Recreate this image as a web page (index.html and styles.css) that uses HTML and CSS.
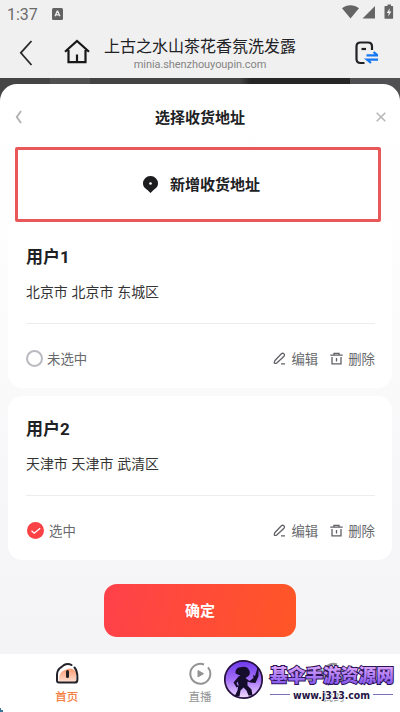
FILE: index.html
```html
<!DOCTYPE html>
<html lang="zh-CN">
<head>
<meta charset="utf-8">
<title>选择收货地址</title>
<link rel="stylesheet" href="styles.css">
</head>
<body>
<div class="screen">
  <header class="status">
    <span class="clock">1:37</span>
    <svg class="badge-a" width="11" height="12" viewBox="0 0 11 12"><rect width="11" height="12" rx="1.5" fill="#626262"/><path d="M3 8.3 5.2 3.2h.5L8 8.3M3.8 6.9h3.3" fill="none" stroke="#f0f0f0" stroke-width="1.2"/></svg>
    <svg class="signals" width="52" height="16" viewBox="0 0 52 16"><path d="M0 4.3C4.800 .1 12 .1 17 4.300L8.500 14.500Z M33 2v12.500H20.500Z" fill="#656565"/><path d="M43.500 2h2V.5h3.500V2h1.500q.6 0 .6.7v11.200q0 .9-.8.9h-7q-.8 0-.8-.9V2.700q0-.7.8-.7Z" fill="#656565"/><path d="M47.800 4.300 44.700 9h2l-.5 3.500 3.200-5h-2Z" fill="#f0f0f0"/></svg>
  </header>
  <nav class="topbar">
    <svg class="back" width="14" height="26" viewBox="0 0 14 26"><path d="M12.500 1 1.800 12.800 12.500 25" fill="none" stroke="#292929" stroke-width="1.800"/></svg>
    <svg class="house" width="26" height="26" viewBox="0 0 26 26"><path d="M1 12.800 13 2l12 10.800M4.500 11v12.200h17V11M13 15.500V23" fill="none" stroke="#171717" stroke-width="2.200"/></svg>
    <div class="page-name"><div class="name">上古之水山茶花香氛洗发露</div><div class="url">minia.shenzhouyoupin.com</div></div>
    <svg class="switch" width="24" height="24" viewBox="0 0 24 24"><path d="M18 9V5.500Q18 1.500 14 1.500H6.500Q2.500 1.500 2.500 5.500v12.500Q2.500 22 6.500 22h4" fill="none" stroke="#202124" stroke-width="2.200"/><path d="M7.500 8h4.500" stroke="#202124" stroke-width="2.200"/><path d="M12.500 14.300h11L19.500 11M24 18.700H13l4 3.300" fill="none" stroke="#1677f5" stroke-width="2.200"/></svg>
  </nav>
  <main class="backdrop">
    <section class="sheet">
      <div class="sheet-head">
        <svg width="8" height="14" viewBox="0 0 8 14"><path d="M6 1 1.800 7 6 13" fill="none" stroke="#b2b2b2" stroke-width="1.900"/></svg>
        <h1>选择收货地址</h1>
        <svg width="10" height="10" viewBox="0 0 10 10"><path d="m.7.7 8.600 8.600M9.300.7.7 9.300" stroke="#b5b5b5" stroke-width="1.500"/></svg>
      </div>
      <button class="add"><svg width="15" height="17" viewBox="0 0 15 17"><path d="M7.500 0A7.400 7.400 0 0 0 0 7.500c0 3.500 2.500 5 4.500 6.500L7.500 17l3-3C12.500 12.500 15 11 15 7.500A7.400 7.400 0 0 0 7.500 0Z" fill="#1c1c1f"/><circle cx="7.500" cy="7.500" r="1.300" fill="#fff"/></svg><span>新增收货地址</span></button>
      <article class="card first">
        <h2>用户1</h2>
        <p>北京市 北京市 东城区</p>
        <div class="actions">
          <span class="radio"></span><span class="state">未选中</span>
          <svg class="pen" width="13" height="13" viewBox="0 0 13 13"><path d="M3.800 10.900 11 4.200q1-1.300 0-2.300-1.200-1.300-2.600-.2L2.200 8.200q-1 1.200-.8 3 1.400.5 2.400-.3ZM8 11.900h4" fill="none" stroke="#606166" stroke-width="1.300"/></svg><span>编辑</span>
          <svg class="bin" width="13" height="13" viewBox="0 0 13 13"><path d="M.3 3.200h12.400M4 3V1.300h5V3M2 5v6.800h9V5M6.500 6v3.500" fill="none" stroke="#606166" stroke-width="1.300"/></svg><span>删除</span>
        </div>
      </article>
      <article class="card">
        <h2>用户2</h2>
        <p>天津市 天津市 武清区</p>
        <div class="actions">
          <svg class="checked" width="17" height="17" viewBox="0 0 17 17"><circle cx="8.500" cy="8.500" r="8.500" fill="#fa4145"/><path d="m4.500 8.700 2.700 2.500 6-5" fill="none" stroke="#fff" stroke-width="1.300"/></svg><span class="state">选中</span>
          <svg class="pen" width="13" height="13" viewBox="0 0 13 13"><path d="M3.800 10.900 11 4.200q1-1.300 0-2.300-1.200-1.300-2.600-.2L2.200 8.200q-1 1.200-.8 3 1.400.5 2.400-.3ZM8 11.900h4" fill="none" stroke="#606166" stroke-width="1.300"/></svg><span>编辑</span>
          <svg class="bin" width="13" height="13" viewBox="0 0 13 13"><path d="M.3 3.200h12.400M4 3V1.300h5V3M2 5v6.800h9V5M6.500 6v3.500" fill="none" stroke="#606166" stroke-width="1.300"/></svg><span>删除</span>
        </div>
      </article>
      <button class="confirm">确定</button>
    </section>
  </main>
  <footer class="tabs">
    <div class="tab active"><svg width="24" height="24" viewBox="0 0 24 24"><defs><linearGradient id="peach" x2="0" y2="1"><stop stop-color="#ff996f"/><stop offset="1" stop-color="#ffe0d0"/></linearGradient></defs><path d="M4 20q-1-10 6-12 7-4 11 2v10Z" fill="url(#peach)"/><path d="M16.500 3Q13 .8 9 3L4.500 6.500Q2.200 8.500 2 13v5.500q0 2 2 2h16q2 0 2.300-2 .7-9-2.800-13" fill="none" stroke="#25232a" stroke-width="2" stroke-linecap="round"/><path d="M12.500 9.500v5" stroke="#222" stroke-width="3" stroke-linecap="round"/></svg><span>首页</span></div>
    <div class="tab"><svg width="24" height="24" viewBox="0 0 24 24"><path d="M16 2.500A10 10 0 1 0 20 5.400" fill="none" stroke="#939393" stroke-width="2"/><path d="m10 8.500 5.500 3.200-5.500 3.200Z" fill="#939393" stroke="#939393"/></svg><span>直播</span></div>
    <div class="tab"><svg width="24" height="24" viewBox="0 0 24 24"><path d="M16 2.500A10 10 0 1 0 20 5.400" fill="none" stroke="#939393" stroke-width="2"/></svg><span>我的</span></div>
  </footer>
  <svg class="corner" width="4" height="4" viewBox="0 0 4 4"><path d="M0 0h1v2h2v2H0Z" fill="#3b7397"/></svg>
  <svg class="watermark" width="176" height="44" viewBox="0 0 176 44">
    <defs><linearGradient id="violet" x2="0" y2="1"><stop stop-color="#6c38ed"/><stop offset=".5" stop-color="#a36ef6"/><stop offset="1" stop-color="#f2ddff"/></linearGradient><linearGradient id="letters" x2="0" y2="1"><stop offset=".2" stop-color="#dda6fc"/><stop offset=".9" stop-color="#8457ee"/></linearGradient></defs>
    <circle cx="19.500" cy="20.500" r="18.700" fill="url(#violet)" stroke="#25103f" stroke-width="1.700"/>
    <path d="M12.500 15q-2-1-.5-4 1-3 6-3 5-1 7 3 2 3-.5 6l-3 2 4 3 4-3-.5-3 2 1 2.500-8 1-1v9l-3 7-5-.5-3-1v4l4 4 1 6h-4l-2-5-3-3-3 3-1 6h-5l3-6 1-6-1-3-1 2 2 3-2 1-3-5 5-6 2-1Z" fill="#160d2c"/>
    <text class="brand" x="46" y="23" textLength="124" lengthAdjust="spacingAndGlyphs">基伞手游资源网</text>
    <path d="M46 35.500h20m83 0h20" stroke="#7871ba"/>
    <text class="site" x="69" y="39.500" textLength="77" lengthAdjust="spacingAndGlyphs">www.j313.com</text>
  </svg>
</div>
</body>
</html>
```
FILE: styles.css
```css
* { box-sizing: border-box; }
body { margin: 0; font-family: Roboto, "Noto Sans CJK SC", sans-serif; color: #202124; }
svg { display: block; flex-shrink: 0; }
button { border: 0; font: inherit; padding: 0; }
.screen { position: relative; width: 400px; height: 712px; overflow: hidden; display: flex; flex-direction: column; background: #f0f0f0; }
.status { height: 28px; display: flex; align-items: center; padding: 0 7px; color: #6b6b6b; }
.clock { font-size: 16px; width: 45px; }
.badge-a { margin-top: -1px; }
.signals { margin: -4px -1px 0 auto; }
.topbar { height: 50px; display: flex; align-items: center; padding: 0 22px 0 19px; }
.house { margin: -3px 0 0 31px; }
.page-name { width: 192px; margin-left: 14px; text-align: center; white-space: nowrap; }
.name { font-size: 16px; line-height: 22px; margin-top: 1px; }
.url { font-size: 11px; line-height: 14px; color: #858585; letter-spacing: -.08px; }
.switch { margin-left: auto; }
.backdrop { height: 576px; padding-top: 6px; background: linear-gradient(90deg, #454545 0 50px, #505050 50px 90px, #434343 90px 240px, #262626 250px 350px, #505052 350px); }
.sheet { height: 570px; border-radius: 17px 17px 0 0; background: linear-gradient(#fff 0, #fefefe 130px, #f6f6f8 440px, #f4f4f7 570px); }
.sheet-head { height: 63px; padding: 3px 14px 0 15px; display: flex; align-items: center; justify-content: space-between; }
h1, h2, p { margin: 0; }
h1 { font-size: 15px; font-weight: 700; padding-left: 1px; margin-top: -2px; }
.add { display: flex; align-items: center; justify-content: center; gap: 12px; width: 366px; height: 75px; margin-left: 15px; border: 3px solid #e95858; border-radius: 2px; background: #fff; color: #202124; font-size: 15px; font-weight: 700; padding-left: 7px; }
.add span { margin-top: -3px; }
.card { margin: 8px 8px 0; height: 164px; border-radius: 14px; background: #fff; padding: 22px 18px 0; }
.card.first { margin-top: 0; height: 166px; padding-top: 24px; border-radius: 0 0 14px 14px; }
h2 { font-size: 17px; line-height: 22px; font-weight: 700; }
p { font-size: 13.900px; line-height: 20px; margin-top: 14px; word-spacing: .5px; color: #343434; }
.actions { display: flex; align-items: center; margin-top: 21px; border-top: 1px solid #ededed; height: 70px; width: 349px; font-size: 13.400px; color: #68696d; }
.actions span { margin-top: -2px; }
.actions .radio { width: 17px; height: 17px; margin-top: 0; border: 2px solid #b8bac0; border-radius: 50%; }
.actions .state { margin-left: 4px; }
.checked { margin-left: 1px; }
.checked + .state { margin-left: 5px; }
.pen { margin-left: auto; margin-right: 5px; }
.bin { margin-left: 12px; margin-right: 5px; }
.confirm { display: block; width: 192px; height: 53px; margin: 24px auto 0; border-radius: 13px; background: linear-gradient(100deg, #ff414a, #ff5626); color: #fff; font-size: 15px; font-weight: 700; padding-bottom: 3px; }
.tabs { height: 58px; display: grid; grid-template-columns: repeat(3, 1fr); background: #fff; }
.tab { display: flex; flex-direction: column; align-items: center; padding-top: 8px; color: #949494; font-size: 11.500px; line-height: 16px; gap: 3px; }
.tab.active { color: #f47c3e; font-weight: 500; }
.watermark { position: absolute; left: 224px; top: 659px; }
.corner { position: absolute; left: 0; bottom: 0; }
.brand { font: 900 18px "Noto Sans CJK SC", sans-serif; fill: url(#letters); stroke: #2d1454; stroke-width: 2px; paint-order: stroke; }
.site { font: 700 11px "DejaVu Sans", sans-serif; fill: #241445; stroke: #fff; stroke-width: 1.500px; paint-order: stroke; }
```
